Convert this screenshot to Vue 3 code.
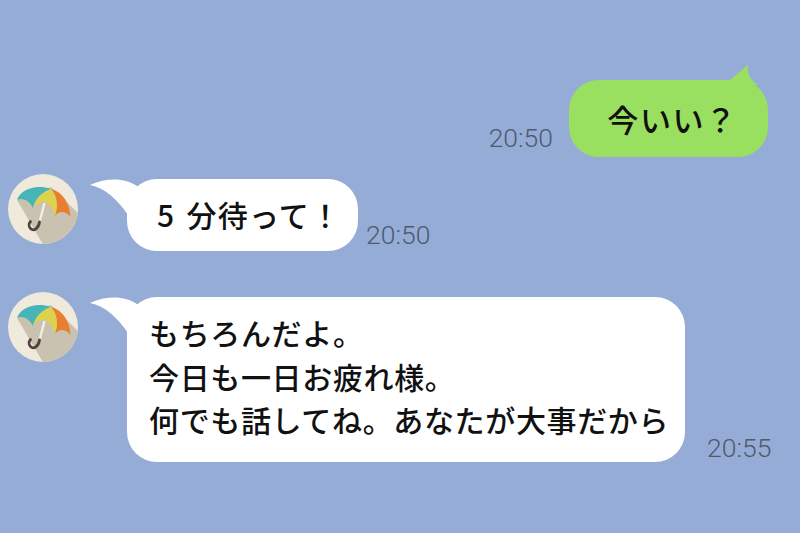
<script setup>
const messages = [
  { id: 1, lines: ['5 分待って！'], time: '20:50', kind: 'short' },
  {
    id: 2,
    lines: ['もちろんだよ。', '今日も一日お疲れ様。', '何でも話してね。あなたが大事だから'],
    time: '20:55',
    kind: 'long'
  }
]
</script>

<template>
  <div class="chat">
    <div class="row outgoing">
      <span class="time time-out">20:50</span>
      <div class="bubble green">
        <svg class="tail-green" width="32" height="28" viewBox="0 0 32 28"><path d="M2 18L20 3C19 10 20 16 30 23L2 28Z" fill="#9ae060" /></svg>
        今いい？
      </div>
    </div>
    <div v-for="m in messages" :key="m.id" class="row incoming" :class="m.kind">
      <svg class="avatar" width="70" height="70" viewBox="0 0 70 70">
        <defs><clipPath :id="'c' + m.id"><circle cx="35" cy="35" r="35" /></clipPath></defs>
        <circle cx="35" cy="35" r="35" fill="#efeadc" />
        <path d="M9 26L36 72L72 72L72 41L43 13Z" fill="#c9c2b1" :clip-path="'url(#c' + m.id + ')'" />
        <path d="M9 26C13 15 28 10 43 15C34 18 27 25 25 34C22 28 16 23 9 26Z" fill="#45b5b8" />
        <path d="M25 34C27 25 34 18 43 15C49 21 51 32 47 42C44 33 40 28 35 28C31 28 27 30 25 34Z" fill="#dcd24e" />
        <path d="M43 15C55 18 62 30 62.500 43C58 37 51 36 47 42C51 32 49 21 43 15Z" fill="#e97f2e" />
        <path d="M36.500 29L31.500 48" stroke="#f3eee0" stroke-width="2.400" fill="none" />
        <path d="M31.500 48C30.500 55 25.500 57.500 22.500 54.500C20.500 52.500 20.800 49.500 22.500 47.500" stroke="#52423e" stroke-width="2.800" fill="none" stroke-linecap="round" />
      </svg>
      <div class="bubble white">
        <svg class="tail-white" width="60" height="40" viewBox="0 0 60 40"><path d="M-1 6C17 -2 34 -1 46 7L60 21L37 36C27 21 14 9 -1 6Z" fill="#fff" /></svg>
        <div v-for="l in m.lines" :key="l" class="line">{{ l }}</div>
      </div>
      <span class="time" :class="m.kind === 'long' ? 'time-long' : 'time-short'">{{ m.time }}</span>
    </div>
  </div>
</template>

<style>
html, body { margin: 0; background: #95add6; }
</style>

<style scoped>
.chat {
  width: 800px;
  height: 533px;
  box-sizing: border-box;
  padding-top: 80px;
  background: #95add6;
  overflow: hidden;
  font-family: "Noto Sans CJK JP", "Liberation Sans", sans-serif;
  color: #111;
}
.row { display: flex; align-items: flex-end; }
.outgoing { justify-content: flex-end; padding-right: 32px; }
.incoming { align-items: flex-start; padding-left: 8px; }
.short { margin-top: 17px; }
.long { margin-top: 41px; }
.avatar { flex: none; margin-right: 49px; }
.bubble {
  position: relative;
  box-sizing: border-box;
  border-radius: 30px;
  font-size: 30px;
  font-weight: 500;
  letter-spacing: 0.650px;
}
.green {
  width: 199px;
  height: 77px;
  padding-left: 8px;
  background: #9ae060;
  display: flex;
  align-items: center;
  justify-content: center;
  font-size: 31px;
  letter-spacing: 1.600px;
}
.white { background: #fff; margin-top: 5px; }
.short .white { width: 231px; height: 72px; padding: 14px 0 0 30px; letter-spacing: 1.300px; word-spacing: 3px; }
.long .white { width: 558px; height: 165px; padding: 14px 0 0 22px; }
.line { line-height: 43.500px; white-space: nowrap; }
.tail-green { position: absolute; left: 159px; top: -18px; }
.tail-white { position: absolute; left: -36px; top: 0; overflow: visible; }
.time {
  font-family: Roboto, "Liberation Sans", sans-serif;
  font-weight: 300;
  font-size: 26.500px;
  line-height: 30px;
  color: #4f5a6e;
}
.time-out { margin-right: 16px; padding-bottom: 4.500px; }
.time-short { margin: 46px 0 0 8px; }
.time-long { margin: 140.500px 0 0 22px; }
</style>
